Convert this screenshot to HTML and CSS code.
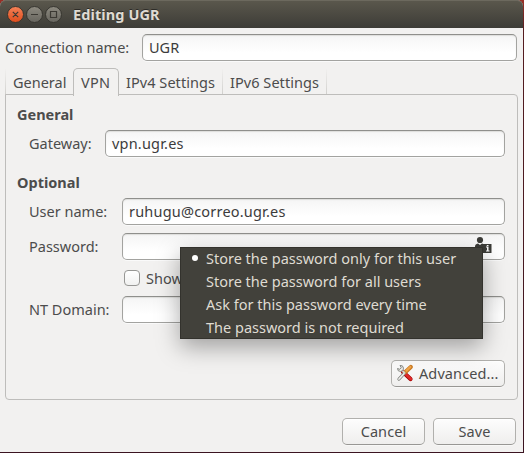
FILE: index.html
```html
<!DOCTYPE html>
<html lang="en">
<head>
<meta charset="utf-8">
<title>Editing UGR</title>
<link rel="stylesheet" href="styles.css">
</head>
<body>
<div class="window">
  <header class="titlebar">
    <svg class="controls" width="58" height="20" viewBox="0 0 58 20">
      <defs>
        <linearGradient id="close" x1="0" y1="0" x2="0" y2="1"><stop offset="0" stop-color="#f58258"/><stop offset="1" stop-color="#df4c1b"/></linearGradient>
        <linearGradient id="grey" x1="0" y1="0" x2="0" y2="1"><stop offset="0" stop-color="#8d8a80"/><stop offset="1" stop-color="#67655e"/></linearGradient>
      </defs>
      <g stroke="#36352f"><circle cx="9.5" cy="9.5" r="8" fill="url(#close)"/><circle cx="28.5" cy="9.5" r="8" fill="url(#grey)"/><circle cx="47.500" cy="9.5" r="8" fill="url(#grey)"/></g>
      <g fill="none" stroke="#3b3933" stroke-width="1.200"><path d="M6.800 6.800l5.400 5.400m0-5.400l-5.400 5.400M25 9.500h7"/><path d="M44.500 6.500h6v6h-6z"/></g>
    </svg>
    <h1 class="title">Editing UGR</h1>
  </header>
  <main class="content">
    <div class="row name-row"><label class="label wide">Connection name:</label><div class="entry">UGR</div></div>
    <nav class="tabs">
      <span class="tab first">General</span><span class="tab active">VPN</span><span class="tab ip4">IPv4 Settings</span><span class="tab ip6">IPv6 Settings</span>
    </nav>
    <section class="panel">
      <h2 class="heading">General</h2>
      <div class="row gateway"><label class="label">Gateway:</label><div class="entry loose">vpn.ugr.es</div></div>
      <h2 class="heading">Optional</h2>
      <div class="row user"><label class="label">User name:</label><div class="entry loose">ruhugu@correo.ugr.es</div></div>
      <div class="row password"><label class="label">Password:</label><div class="entry with-icon">
        <svg width="18" height="18" viewBox="0 0 18 18"><g fill="#3c3c38"><circle cx="6" cy="4" r="3.100"/><path d="M1 14V10.500Q1 8 4 7.500L6 9 8 7.500Q11 8 11 10.500V14z"/><path d="M9 8h8.500v9H9z"/></g><path d="M12 10.500h2.500v4h1v1H12v-1h1v-3h-1zM12.800 9h1.700v1h-1.700z" fill="#fff"/></svg>
      </div></div>
      <div class="show"><span class="checkbox"></span><span>Show</span></div>
      <div class="row"><label class="label">NT Domain:</label><div class="entry"></div></div>
      <div class="advanced-row"><button class="button advanced">
        <svg width="18" height="18" viewBox="0 0 18 18"><path d="M7 8L14.500 15" stroke="#a40000" stroke-width="4.200" stroke-linecap="round"/><path d="M9.500 10L14.700 15" stroke="#df2929" stroke-width="2.800" stroke-linecap="round"/><path d="M3 15L10.500 7" stroke="#777974" stroke-width="3.200" stroke-linecap="round"/><path d="M3 15L10.500 7" stroke="#eeeeec" stroke-width="1.800" stroke-linecap="round"/><path d="M10 7.500L14.800 3" stroke="#c97a24" stroke-width="4.200" stroke-linecap="round"/><path d="M10.500 6.700L14.300 3" stroke="#f2a445" stroke-width="2.400" stroke-linecap="round"/><path d="M4 1.500A3 3 0 1 1 1.500 4.500L3.800 5.300 5.300 3.800z" fill="#eeeeec" stroke="#888a85"/><path d="M6.500 7L9 9.500" stroke="#d3d7cf" stroke-width="2"/></svg>
        <span>Advanced...</span></button></div>
    </section>
    <footer class="actions"><button class="button">Cancel</button><button class="button">Save</button></footer>
  </main>
  <ul class="menu">
    <li class="item chosen">Store the password only for this user</li>
    <li class="item">Store the password for all users</li>
    <li class="item">Ask for this password every time</li>
    <li class="item">The password is not required</li>
  </ul>
</div>
</body>
</html>
```
FILE: styles.css
```css
* { box-sizing: border-box; }
body {
  margin: 0;
  height: 453px;
  background: linear-gradient(#9a3027 0, #561d20 30px, #3b1421 453px);
  font: 14.5px/20px "Noto Sans", "Open Sans", sans-serif;
  letter-spacing: 0;
  color: #4c4c4c;
}
.window {
  position: relative;
  width: 523px;
  height: 452px;
  display: flex;
  flex-direction: column;
  background: #f2f1f0;
  border-radius: 6px 6px 0 0;
}
.titlebar {
  height: 28px;
  display: flex;
  align-items: center;
  gap: 9px;
  padding: 1px 0 0 6px;
  border-radius: 6px 6px 0 0;
  background: linear-gradient(#5b584d, #3d3c37);
  box-shadow: inset 0 1px #6c695e;
}
.title {
  margin: 0 0 2px;
  font-size: 14.5px;
  line-height: 20px;
  letter-spacing: 0.1px;
  color: #dfdbd2;
  text-shadow: 0 -1px #2d2c28;
}
.content { flex: 1; display: flex; flex-direction: column; padding: 6px 6px 0 5px; }
.row { display: flex; height: 27px; align-items: center; }
.label { width: 93px; flex: none; padding-bottom: 2px; }
.wide { width: 137px; }
.entry {
  flex: 1;
  height: 27px;
  padding: 2px 6px;
  border: 1px solid #a3a3a0;
  border-top-color: #8f8f8c;
  border-radius: 5px;
  background: linear-gradient(#f5f5f5, #fff 70%);
  box-shadow: inset 0 1px 1px #dededc, 0 1px #fafafa;
  color: #3c3c3c;
}
.loose { letter-spacing: 0.2px; }
.name-row { margin-bottom: 7px; }
.name-row .entry { flex: none; width: 375px; }
.tabs { display: flex; height: 27px; align-items: flex-end; }
.tab {
  height: 26px;
  padding: 3px 0 0 8px;
  border-right: 1px solid;
  border-image: linear-gradient(transparent, #cfcecb) 1;
}
.first { width: 68px; border-left: 1px solid; border-right: 0; padding-left: 7px; }
.active {
  height: 28px;
  width: 46px;
  margin-bottom: -1px;
  padding: 3px 0 0 7px;
  border: 1px solid #bebdbb;
  border-bottom: 0;
  border-image: none;
  border-radius: 5px 5px 0 0;
  background: #f2f1f0;
  letter-spacing: 0.3px;
  z-index: 1;
}
.ip4, .ip6 { width: 104px; padding-left: 7px; letter-spacing: 0.05px; }
.panel {
  height: 306px;
  width: 513px;
  margin-top: -1px;
  padding: 9px 12px 0 11px;
  border: 1px solid #bebdbb;
  border-radius: 0 4px 4px 4px;
}
.heading { margin: 0; font-size: 14.5px; line-height: 20px; }
.panel .row, .show { margin-left: 12px; }
.gateway { margin: 6px 0 15px; }
.gateway .label { width: 76px; }
.user { margin: 6px 0 8px; }
.password { margin-bottom: 8px; }
.with-icon { display: flex; justify-content: flex-end; }
.with-icon svg { margin: 0 6px 0 0; }
.show { display: flex; align-items: center; gap: 6px; height: 20px; padding-left: 95px; margin-bottom: 8px; }
.checkbox {
  width: 16px;
  height: 16px;
  border: 1px solid #979794;
  border-radius: 4px;
  background: linear-gradient(#fff, #f1f1f0);
}
.show span:last-child { padding-bottom: 1px; }
.advanced-row { display: flex; justify-content: flex-end; margin-top: 37px; }
.button {
  width: 83px;
  height: 27px;
  padding: 0 0 2px;
  border: 1px solid #b1b0ad;
  border-bottom-color: #989794;
  border-radius: 5px;
  background: linear-gradient(#fdfdfd, #efeeed);
  box-shadow: inset 0 1px #fff, 0 1px #f8f8f7;
  font: inherit;
  letter-spacing: 0.1px;
  color: inherit;
}
.advanced { width: 114px; display: flex; align-items: center; gap: 5px; padding-left: 4px; }
.actions { display: flex; justify-content: flex-end; gap: 8px; margin: 18px 1px 0 0; }
.menu {
  position: absolute;
  left: 180px;
  top: 247px;
  width: 303px;
  height: 92px;
  margin: 0;
  padding: 0;
  list-style: none;
  border: 1px solid #33322d;
  background: #42413b;
  color: #dfdbd2;
  box-shadow: 0 8px 22px rgba(0, 0, 0, 0.34);
}
.item { height: 23px; padding-left: 25px; line-height: 21px; }
.chosen { position: relative; }
.chosen::before {
  content: "";
  position: absolute;
  left: 11px;
  top: 7px;
  width: 6px;
  height: 6px;
  border-radius: 50%;
  background: #fff;
}
```
